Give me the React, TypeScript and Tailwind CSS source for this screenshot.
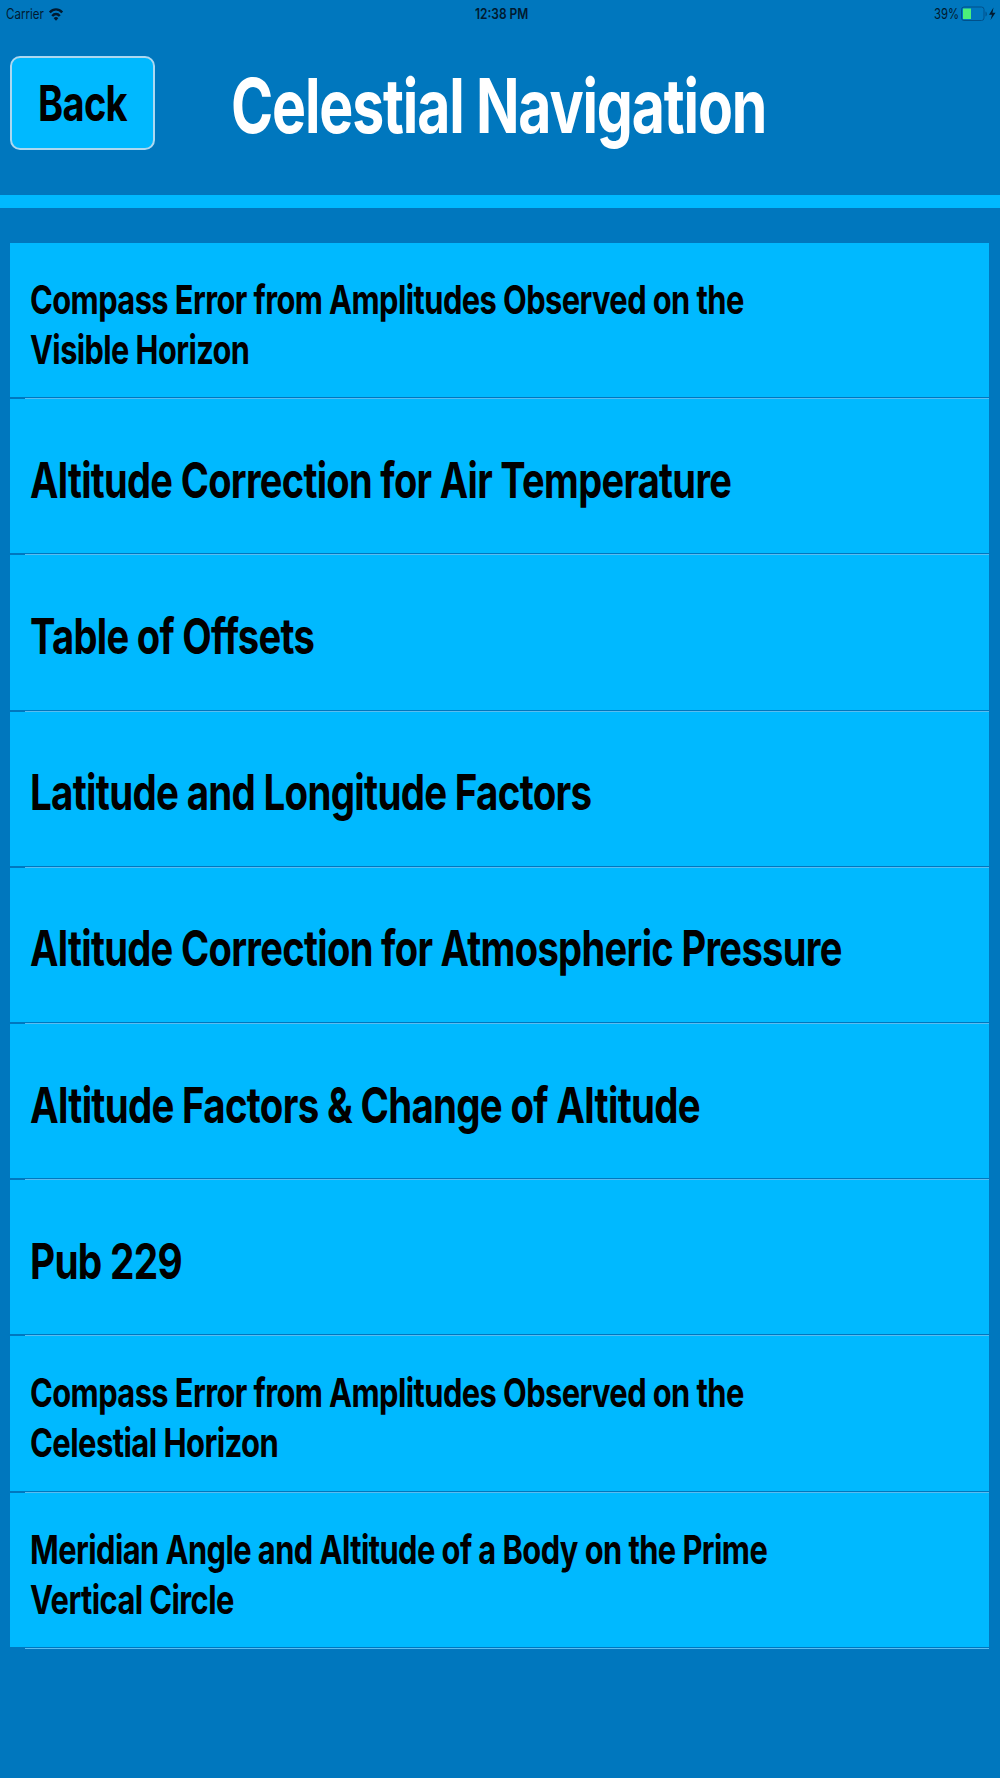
import { useLayoutEffect, useRef, useState } from 'react'
import clsx from 'clsx'

interface Line {
  text: string
  width: number
}

const ROWS: Line[][] = [
  [
    { text: 'Compass Error from Amplitudes Observed on the', width: 714 },
    { text: 'Visible Horizon', width: 219.5 },
  ],
  [{ text: 'Altitude Correction for Air Temperature', width: 701 }],
  [{ text: 'Table of Offsets', width: 284.5 }],
  [{ text: 'Latitude and Longitude Factors', width: 561.5 }],
  [{ text: 'Altitude Correction for Atmospheric Pressure', width: 811.5 }],
  [{ text: 'Altitude Factors & Change of Altitude', width: 670 }],
  [{ text: 'Pub 229', width: 152 }],
  [
    { text: 'Compass Error from Amplitudes Observed on the', width: 714 },
    { text: 'Celestial Horizon', width: 248.5 },
  ],
  [
    { text: 'Meridian Angle and Altitude of a Body on the Prime', width: 737 },
    { text: 'Vertical Circle', width: 203.5 },
  ],
]

// Condenses a single line of text horizontally to the given width
function FitText({ text, width, className }: Line & { className?: string }) {
  const ref = useRef<HTMLSpanElement>(null)
  const [scale, setScale] = useState(1)

  useLayoutEffect(() => {
    if (ref.current) setScale(width / ref.current.offsetWidth)
  }, [text, width])

  return (
    <span className="block" style={{ width }}>
      <span
        ref={ref}
        className={clsx('inline-block origin-left whitespace-nowrap align-top', className)}
        style={{ transform: `scaleX(${scale})` }}
      >
        {text}
      </span>
    </span>
  )
}

function WifiIcon() {
  return (
    <svg width="14" height="13" viewBox="0 0 14 13" fill="none" stroke="#001a30" strokeWidth="2.4">
      <path d="M.8 4.4C4.3 .4 9.7 .4 13.2 4.4" />
      <path d="M3.2 8c2.2-2.6 5.4-2.6 7.6 0" />
      <path d="M7 12.8 4.7 10.2c1.2-1.5 3.4-1.5 4.6 0z" fill="#001a30" stroke="none" />
    </svg>
  )
}

function StatusBar() {
  return (
    <div className="grid h-7 grid-cols-3 items-center px-1.5 text-[14px] leading-none text-[#001a30]">
      <div className="flex items-center gap-[5px]">
        <FitText text="Carrier" width={38} />
        <WifiIcon />
      </div>
      <div className="flex justify-center pl-[3px]">
        <FitText text="12:38 PM" width={53} className="font-semibold" />
      </div>
      <div className="-mr-1 flex items-center justify-end">
        <FitText text="39%" width={25} />
        <svg className="ml-[1px]" width="38" height="16" viewBox="0 0 38 16">
          <rect x="1.5" y="1" width="22.5" height="13.5" rx="2.5" fill="none" stroke="#00508a" />
          <rect x="3" y="2.5" width="8" height="10.5" fill="#4cf07a" />
          <path d="M25.5 5.5c1.8.4 1.8 4.6 0 5z" fill="#00508a" />
          <path d="M33.5 1.5 29 8.7h3L30.5 14l5-7.3h-3z" fill="#001a30" />
        </svg>
      </div>
    </div>
  )
}

function Row({ lines }: { lines: Line[] }) {
  const small = lines.length > 1
  return (
    <li className="flex h-[156.2px] flex-col">
      <div
        className={clsx(
          'flex flex-1 flex-col justify-center bg-[#00b9ff] pl-5 font-bold tracking-[-0.018em] text-black',
          small ? 'pt-2.5 text-[40px] leading-[50px]' : 'pt-[7px] text-[50px] leading-[60px]',
        )}
      >
        {lines.map(line => (
          <FitText key={line.text} {...line} />
        ))}
      </div>
      <div className="h-px bg-[#0077be]" />
      <div className="flex h-px bg-[#0077be]">
        <div className="ml-[15px] flex-1 bg-[#5bbcf0]" />
      </div>
    </li>
  )
}

export default function App() {
  return (
    <div className="h-[1778px] w-[1000px] overflow-hidden bg-[#0077be] font-['Inter','Liberation_Sans',sans-serif]">
      <StatusBar />

      {/* Header */}
      <header className="flex h-[167px] items-start pl-[10px] pt-7">
        <button className="flex h-[94px] w-[145px] items-center justify-center rounded-[10px] border-2 border-[#add8f0] bg-[#00b9ff] text-[50px] font-bold leading-none tracking-[-0.018em] text-black">
          <FitText text="Back" width={89} />
        </button>
        <h1 className="ml-[76px] mt-[12px] text-[75px] font-bold leading-[76px] tracking-[-0.02em] text-white">
          <FitText text="Celestial Navigation" width={535.5} />
        </h1>
      </header>
      <div className="h-[13px] bg-[#00b9ff]" />

      {/* Table list */}
      <ul className="ml-[10px] mt-[35px] w-[979px]">
        {ROWS.map((lines, i) => (
          <Row key={i} lines={lines} />
        ))}
      </ul>
    </div>
  )
}
